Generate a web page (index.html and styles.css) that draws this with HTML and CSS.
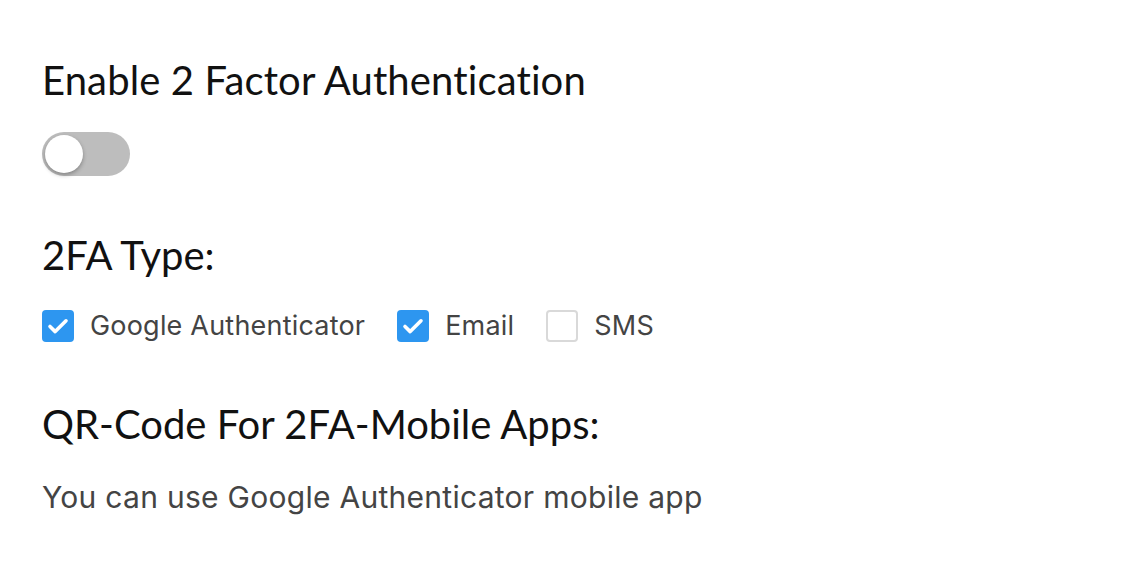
FILE: index.html
```html
<!DOCTYPE html>
<html>
<head>
<meta charset="utf-8">
<link rel="stylesheet" href="styles.css">
</head>
<body>
<main class="page">
  <h2 class="title">Enable 2 Factor Authentication</h2>
  <div class="toggle"><span class="knob"></span></div>

  <h3 class="subtitle type-title">2FA Type:</h3>
  <div class="options">
    <label class="option">
      <span class="box checked"><svg viewBox="0 0 32 32" width="32" height="32"><path d="M8 16.5 L13.2 21.6 L24 10.8" fill="none" stroke="#fff" stroke-width="3.6" stroke-linecap="round" stroke-linejoin="round"/></svg></span>
      <span class="label">Google Authenticator</span>
    </label>
    <label class="option">
      <span class="box checked"><svg viewBox="0 0 32 32" width="32" height="32"><path d="M8 16.5 L13.2 21.6 L24 10.8" fill="none" stroke="#fff" stroke-width="3.6" stroke-linecap="round" stroke-linejoin="round"/></svg></span>
      <span class="label">Email</span>
    </label>
    <label class="option">
      <span class="box"></span>
      <span class="label">SMS</span>
    </label>
  </div>

  <h3 class="subtitle qr-title">QR-Code For 2FA-Mobile Apps:</h3>
  <p class="text">You can use Google Authenticator mobile app</p>
</main>
</body>
</html>
```

FILE: styles.css
```css
html, body {
  margin: 0;
  padding: 0;
  background: #ffffff;
}

.page {
  padding: 56px 42px 0 42px;
  display: flex;
  flex-direction: column;
  align-items: flex-start;
}

.title {
  margin: 0;
  font-family: Lato, "Liberation Sans", sans-serif;
  font-weight: 400;
  font-size: 40px;
  line-height: 48px;
  letter-spacing: 0.13px;
  color: #111111;
  font-variant-ligatures: none;
}

.toggle {
  margin-top: 28px;
  width: 88px;
  height: 44px;
  border-radius: 22px;
  background: #bdbdbd;
  display: flex;
  align-items: center;
  padding: 0 3px;
  box-sizing: border-box;
}

.knob {
  width: 38px;
  height: 38px;
  border-radius: 50%;
  background: #ffffff;
  box-shadow: 0 2px 4px rgba(0, 0, 0, 0.3);
}

.subtitle {
  margin: 0;
  font-family: Lato, "Liberation Sans", sans-serif;
  font-weight: 400;
  font-size: 40px;
  line-height: 48px;
  color: #111111;
  font-variant-ligatures: none;
}

.type-title {
  margin-top: 55px;
}

.options {
  margin-top: 31px;
  display: flex;
  align-items: center;
  gap: 32px;
}

.option {
  display: flex;
  align-items: center;
  gap: 16px;
}

.box {
  width: 32px;
  height: 32px;
  box-sizing: border-box;
  border-radius: 4px;
  border: 2px solid #d9d9d9;
  background: #ffffff;
  display: block;
}

.box.checked {
  border: none;
  background: #2d96f0;
}

.box svg {
  display: block;
}

.label {
  font-family: Inter, "Noto Sans", sans-serif;
  font-size: 27px;
  line-height: 32px;
  letter-spacing: 0.2px;
  color: #444444;
}

.qr-title {
  margin-top: 58px;
}

.text {
  margin: 31px 0 0 0;
  font-family: Inter, "Noto Sans", sans-serif;
  font-size: 30px;
  line-height: 36px;
  letter-spacing: 0.28px;
  color: #444444;
}
```
